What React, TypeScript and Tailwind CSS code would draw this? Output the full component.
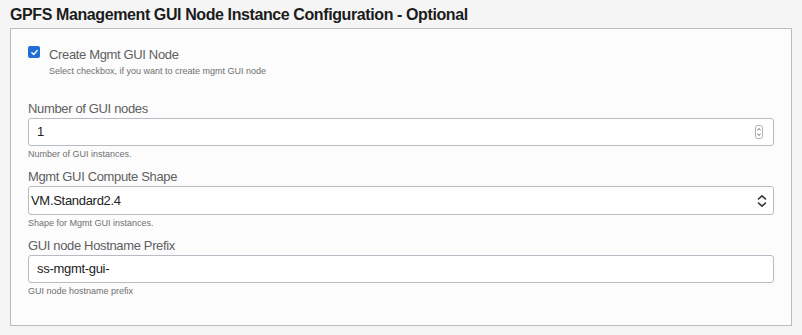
import React from "react";

function Field({
  label,
  help,
  children,
}: {
  label: string;
  help: string;
  children: React.ReactNode;
}) {
  return (
    <div className="flex flex-col">
      <label className="mb-[1px] text-[13px] leading-4 tracking-[-0.35px] text-[#5f5f5f]">{label}</label>
      {children}
      <p className="mt-[3px] text-[9px] leading-[11px] text-[#707070]">{help}</p>
    </div>
  );
}

export default function App() {
  return (
    <div
      className="min-h-screen bg-[#f5f5f5] px-[10px] pt-[5px] text-[#222]"
      style={{ fontFamily: '"Liberation Sans", Arial, sans-serif' }}
    >
      {/* Heading */}
      <h2 className="text-[16px] font-bold leading-5 tracking-[-0.4px] text-[#1c1c1c]">
        GPFS Management GUI Node Instance Configuration - Optional
      </h2>

      {/* Panel */}
      <div className="mt-[3px] w-[782px] border border-[#b7bbc3] bg-[#fcfcfc] px-[17px] pt-[17px] pb-[28px]">
        {/* Checkbox */}
        <div className="flex items-start gap-[9px]">
          <div className="flex h-[12px] w-[12px] items-center justify-center rounded-[2px] bg-[#1f6fd6]">
            <svg width="9" height="9" viewBox="0 0 10 10" fill="none">
              <path d="M2 5.2 L4.1 7.2 L8 2.8" stroke="white" strokeWidth="1.5" strokeLinecap="round" strokeLinejoin="round" />
            </svg>
          </div>
          <div className="mt-[1px] flex flex-col">
            <span className="text-[13px] leading-4 tracking-[-0.35px] text-[#5f5f5f]">Create Mgmt GUI Node</span>
            <span className="mt-[3px] text-[9px] leading-[11px] text-[#707070]">
              Select checkbox, if you want to create mgmt GUI node
            </span>
          </div>
        </div>

        <div className="mt-[24px] flex flex-col gap-[9px]">
          <Field label="Number of GUI nodes" help="Number of GUI instances.">
            <div className="flex h-[28px] items-center justify-between rounded-[3px] border border-[#b7bbc3] bg-white pl-[8px] pr-[10px]">
              <span className="text-[13px] tracking-[-0.3px] text-[#222]">1</span>
              <svg width="8" height="14" viewBox="0 0 8 14" fill="none">
                <rect x="0.5" y="0.5" width="7" height="13" rx="2" stroke="#b0b0b0" />
                <path d="M2.3 5.2 L4 3.6 L5.7 5.2" stroke="#555" strokeWidth="0.9" />
                <path d="M2.3 8.8 L4 10.4 L5.7 8.8" stroke="#555" strokeWidth="0.9" />
              </svg>
            </div>
          </Field>

          <Field label="Mgmt GUI Compute Shape" help="Shape for Mgmt GUI instances.">
            <div className="flex h-[29px] items-center justify-between rounded-[3px] border border-[#b7bbc3] bg-white pl-[2px] pr-[6px]">
              <span className="text-[13px] tracking-[-0.3px] text-[#222]">VM.Standard2.4</span>
              <svg width="10" height="14" viewBox="0 0 10 14" fill="none">
                <path d="M1.5 5 L5 1.8 L8.5 5" stroke="#333" strokeWidth="1.6" strokeLinecap="round" strokeLinejoin="round" />
                <path d="M1.5 9 L5 12.2 L8.5 9" stroke="#333" strokeWidth="1.6" strokeLinecap="round" strokeLinejoin="round" />
              </svg>
            </div>
          </Field>

          <Field label="GUI node Hostname Prefix" help="GUI node hostname prefix">
            <div className="flex h-[28px] items-center rounded-[3px] border border-[#b7bbc3] bg-white pl-[8px]">
              <span className="text-[13px] tracking-[-0.3px] text-[#222]">ss-mgmt-gui-</span>
            </div>
          </Field>
        </div>
      </div>
    </div>
  );
}
